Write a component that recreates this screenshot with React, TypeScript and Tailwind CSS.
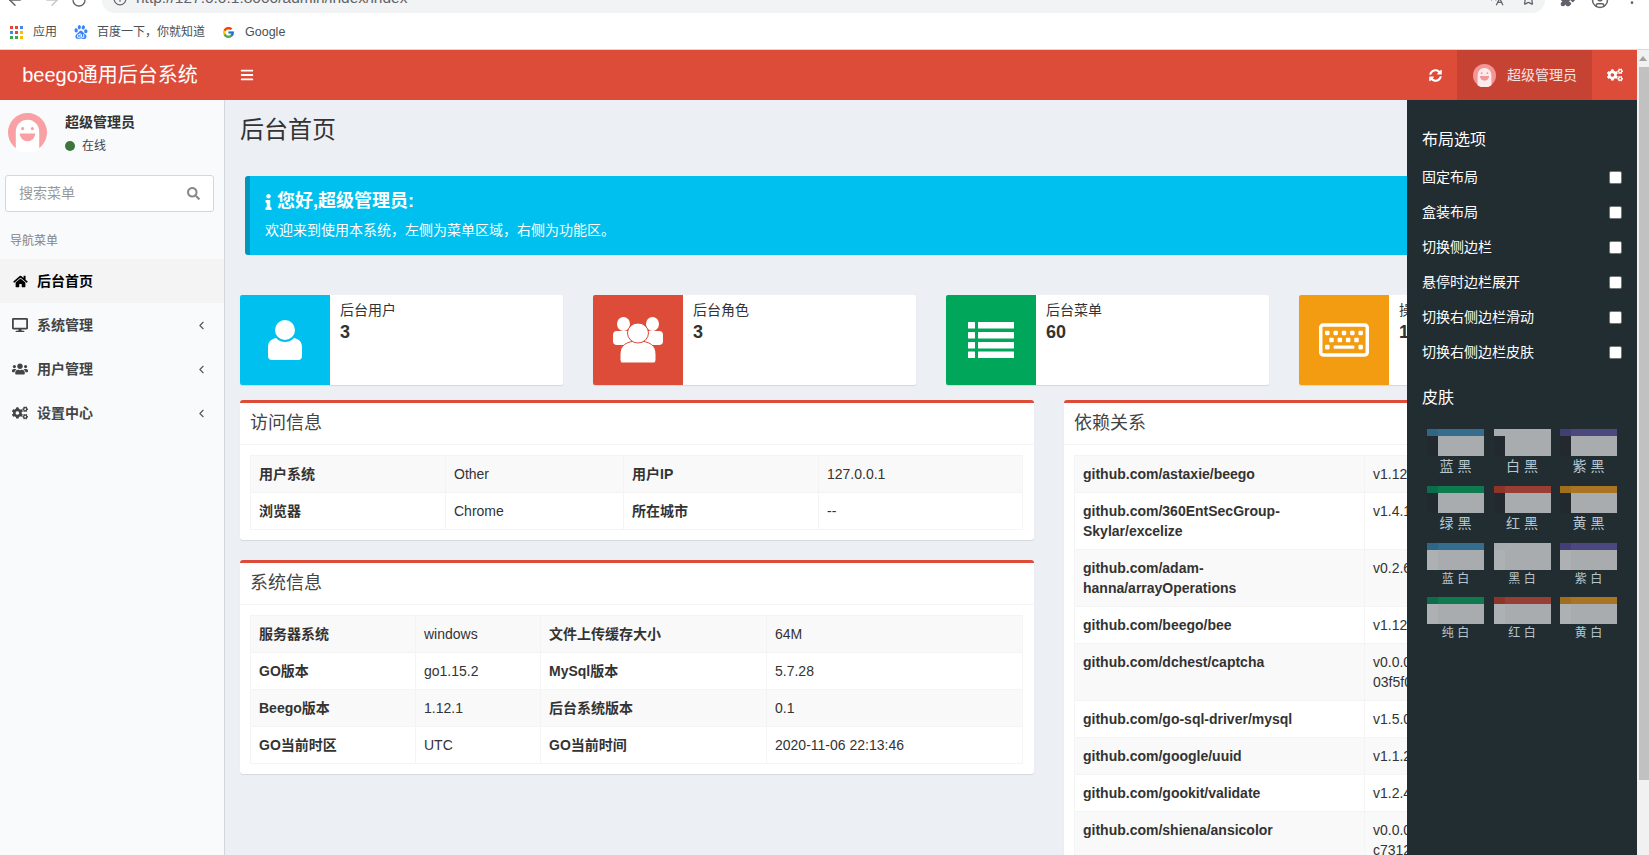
import { ArrowLeft, ArrowRight, ChevronLeft, RotateCw, Info, Star, Puzzle, CircleUser, EllipsisVertical, Languages } from "lucide-react";
import {
  FaBars,
  FaCogs,
  FaDesktop,
  FaHome,
  FaInfo,
  FaRegKeyboard,
  FaSearch,
  FaSyncAlt,
  FaUsers,
} from "react-icons/fa";
import { FcGoogle } from "react-icons/fc";
import { SiBaidu } from "react-icons/si";

const FONT = "font-['Liberation_Sans','Noto_Sans_CJK_SC',sans-serif]";

function PersonIcon() {
  return (
    <svg viewBox="0 0 34 40" className="h-[40px] w-[34px]" fill="#fff">
      <circle cx="17" cy="10" r="10" />
      <path d="M4 40q-4 0-4-4v-9c0-5 3-8 8-9 3 3 6 4 9 4s6-1 9-4c5 1 8 4 8 9v9q0 4-4 4z" />
    </svg>
  );
}

function PeopleIcon() {
  return (
    <svg viewBox="0 0 50 46" className="h-[46px] w-[50px]" fill="#fff">
      <ellipse cx="10.5" cy="7" rx="6.5" ry="7" />
      <ellipse cx="39.5" cy="7" rx="6.5" ry="7" />
      <rect x="0" y="14" width="18" height="14" rx="4" />
      <rect x="32" y="14" width="18" height="14" rx="4" />
      <path d="M9 46q-2 0-2-3v-6c0-8 6-13 18-13s18 5 18 13v6q0 3-2 3z" stroke="#dd4b39" />
      <ellipse cx="25" cy="16" rx="10.5" ry="10" stroke="#dd4b39" />
    </svg>
  );
}

function ListIcon() {
  return (
    <svg viewBox="0 0 46 36" className="h-[36px] w-[46px]" fill="#fff">
      {[0, 10, 20, 29.5].map((y) => (
        <g key={y}>
          <rect x="0" y={y} width="7" height="6.5" rx="0.5" />
          <rect x="10" y={y} width="36" height="6.5" rx="0.5" />
        </g>
      ))}
    </svg>
  );
}

const menuItems = [
  { label: "系统管理", icon: <FaDesktop /> },
  { label: "用户管理", icon: <FaUsers /> },
  { label: "设置中心", icon: <FaCogs /> },
];

const statBoxes = [
  { label: "后台用户", value: "3", color: "bg-[#00c0ef]", icon: <PersonIcon /> },
  { label: "后台角色", value: "3", color: "bg-[#dd4b39]", icon: <PeopleIcon /> },
  { label: "后台菜单", value: "60", color: "bg-[#00a65a]", icon: <ListIcon /> },
  { label: "操作日志", value: "1", color: "bg-[#f39c12]", icon: <FaRegKeyboard className="text-[50px] text-white" /> },
];

const visitRows = [
  ["用户系统", "Other", "用户IP", "127.0.0.1"],
  ["浏览器", "Chrome", "所在城市", "--"],
];

const systemRows = [
  ["服务器系统", "windows", "文件上传缓存大小", "64M"],
  ["GO版本", "go1.15.2", "MySql版本", "5.7.28"],
  ["Beego版本", "1.12.1", "后台系统版本", "0.1"],
  ["GO当前时区", "UTC", "GO当前时间", "2020-11-06 22:13:46"],
];

const dependencies = [
  ["github.com/astaxie/beego", "v1.12.1"],
  ["github.com/360EntSecGroup-Skylar/excelize", "v1.4.1"],
  ["github.com/adam-hanna/arrayOperations", "v0.2.6"],
  ["github.com/beego/bee", "v1.12.0"],
  ["github.com/dchest/captcha", "v0.0.0-20200903113550-03f5f0333e1f"],
  ["github.com/go-sql-driver/mysql", "v1.5.0"],
  ["github.com/google/uuid", "v1.1.2"],
  ["github.com/gookit/validate", "v1.2.4"],
  ["github.com/shiena/ansicolor", "v0.0.0-20200904210340-c7312218db18"],
];

const layoutOptions = ["固定布局", "盒装布局", "切换侧边栏", "悬停时边栏展开", "切换右侧边栏滑动", "切换右侧边栏皮肤"];

const skins = [
  { name: "蓝 黑", left: "bg-[#2f6585]", top: "bg-[#366d8f]", dark: true },
  { name: "白 黑", left: "bg-[#a8acae]", top: "bg-[#a8acae]", dark: true },
  { name: "紫 黑", left: "bg-[#433f75]", top: "bg-[#4b4880]", dark: true },
  { name: "绿 黑", left: "bg-[#0b6d4a]", top: "bg-[#0e7a50]", dark: true },
  { name: "红 黑", left: "bg-[#8f3428]", top: "bg-[#983e34]", dark: true },
  { name: "黄 黑", left: "bg-[#a06f1e]", top: "bg-[#a97522]", dark: true },
  { name: "蓝 白", left: "bg-[#2f6585]", top: "bg-[#366d8f]", dark: false },
  { name: "黑 白", left: "bg-[#a8acae]", top: "bg-[#a8acae]", dark: false },
  { name: "紫 白", left: "bg-[#433f75]", top: "bg-[#4b4880]", dark: false },
  { name: "纯 白", left: "bg-[#0b6d4a]", top: "bg-[#0e7a50]", dark: false },
  { name: "红 白", left: "bg-[#8f3428]", top: "bg-[#983e34]", dark: false },
  { name: "黄 白", left: "bg-[#a06f1e]", top: "bg-[#a97522]", dark: false },
];

function Avatar({ className }: { className: string }) {
  return (
    <svg viewBox="0 0 40 40" className={className}>
      <circle cx="20" cy="20" r="20" fill="#f9a0a4" />
      <path d="M8 37V19a12 12 0 0 1 24 0v18a20 20 0 0 1-24 0z" fill="#fff" />
      <circle cx="15" cy="16" r="1.6" fill="#f9a0a4" />
      <circle cx="25" cy="16" r="1.6" fill="#f9a0a4" />
      <path d="M12 21h16a8 8 0 0 1-16 0z" fill="#f9a0a4" />
    </svg>
  );
}

function AppsIcon() {
  const colors = ["#ea4335", "#ea4335", "#4285f4", "#4285f4", "#ea4335", "#fbbc04", "#34a853", "#34a853", "#fbbc04"];
  return (
    <div className="grid h-[13px] w-[13px] grid-cols-3 gap-[2px]">
      {colors.map((color, index) => (
        <span key={index} style={{ backgroundColor: color }} />
      ))}
    </div>
  );
}

function BrowserBar() {
  return (
    <>
      <div className="flex h-[13px] items-start overflow-hidden bg-white text-[#5f6368]">
        <ArrowLeft size={18} className="-mt-[9px] ml-[6px] shrink-0" />
        <ArrowRight size={18} className="-mt-[9px] ml-[19px] shrink-0 text-[#c4c7c9]" />
        <RotateCw size={16} className="-mt-[8px] ml-[10px] shrink-0" />
        <div className="ml-[15px] flex h-[13px] w-[1443px] shrink-0 items-start rounded-br-[13px] rounded-bl-[13px] bg-[#f1f3f4]">
          <Info size={14} className="-mt-[8px] ml-[11px] shrink-0" />
          <span className="-mt-[12px] ml-[9px] text-[15.5px] leading-[20px] text-[#5f6368]">http://127.0.0.1:8000/admin/index/index</span>
          <Languages size={15} className="-mt-[9px] ml-auto shrink-0" />
          <Star size={15} className="-mt-[9px] mr-[9px] ml-[17px] shrink-0" />
        </div>
        <Puzzle size={16} fill="#5f6368" className="-mt-[9px] ml-[15px] shrink-0" />
        <CircleUser size={18} className="-mt-[9px] ml-[15px] shrink-0" />
        <EllipsisVertical size={16} className="-mt-[10px] ml-[15px] shrink-0" />
      </div>
      <div className="flex h-[37px] items-center border-b border-[#d9d9d9] bg-white pt-[2px] text-[12px] text-[#4a4f54]">
        <div className="ml-[10px]">
          <AppsIcon />
        </div>
        <span className="ml-[10px]">应用</span>
        <SiBaidu className="ml-[17px] text-[14px] text-[#3b82f6]" />
        <span className="ml-[9px]">百度一下，你就知道</span>
        <FcGoogle className="ml-[17px] text-[13px]" />
        <span className="ml-[10px] text-[12.5px]">Google</span>
      </div>
    </>
  );
}

function Header() {
  return (
    <header className="flex h-[50px] items-center bg-[#dd4b39] text-white">
      <div className="w-[225px] pr-[5px] text-center text-[20px] leading-[50px]">beego通用后台系统</div>
      <FaBars className="ml-[15px] text-[14px]" />
      <div className="ml-auto flex h-full items-center">
        <FaSyncAlt className="mr-[15px] text-[13px]" />
        <div className="flex h-full w-[135px] items-center bg-[#c64333] pl-[16px]">
          <Avatar className="h-[23px] w-[23px] opacity-90" />
          <span className="ml-[11px] text-[14px] text-[#f6e3e0]">超级管理员</span>
        </div>
        <div className="flex h-full w-[45px] items-center justify-center">
          <FaCogs className="text-[16px]" />
        </div>
      </div>
    </header>
  );
}

function Sidebar() {
  return (
    <aside className="w-[225px] shrink-0 border-r border-[#d2d6de] bg-[#f9fafc]">
      <div className="flex h-[75px] pt-[13px] pl-[8px]">
        <Avatar className="h-[39px] w-[39px]" />
        <div className="-mt-[1px] ml-[18px]">
          <p className="text-[14px] leading-[20px] font-semibold text-[#333]">超级管理员</p>
          <p className="mt-[4px] flex items-center text-[12px] leading-[20px] text-[#444]">
            <span className="h-[10px] w-[10px] rounded-full bg-[#3c763d]" />
            <span className="ml-[7px]">在线</span>
          </p>
        </div>
      </div>
      <div className="mx-[5px] flex h-[37px] w-[209px] items-center rounded-[3px] border border-[#d2d6de] bg-white pr-[13px] pl-[13px]">
        <span className="text-[14px] text-[#999]">搜索菜单</span>
        <FaSearch className="ml-auto text-[13px] text-[#8a8a8a]" />
      </div>
      <p className="mt-[20px] h-[27px] pl-[10px] text-[12px] leading-[18px] text-[#848484]">导航菜单</p>
      <nav>
        <div className="flex h-[44px] items-center bg-[#f4f4f5] pl-[13px] text-[14px] font-semibold text-black">
          <FaHome className="w-[15px] text-[13px]" />
          <span className="ml-[9px]">后台首页</span>
        </div>
        {menuItems.map((item) => (
          <div key={item.label} className="flex h-[44px] items-center pr-[16px] pl-[12px] text-[14px] font-semibold text-[#444]">
            <span className="flex w-[16px] justify-center text-[16px]">{item.icon}</span>
            <span className="ml-[9px]">{item.label}</span>
            <ChevronLeft size={13} className="ml-auto text-[#555]" />
          </div>
        ))}
      </nav>
    </aside>
  );
}

function StatBox({ box }: { box: (typeof statBoxes)[number] }) {
  return (
    <div className="flex h-[90px] w-[323px] shrink-0 overflow-hidden rounded-[2px] bg-white shadow-[0_1px_1px_rgba(0,0,0,0.1)]">
      <div className={`flex w-[90px] shrink-0 items-center justify-center ${box.color}`}>{box.icon}</div>
      <div className="px-[10px] py-[5px] text-[#333]">
        <p className="text-[14px] leading-[20px]">{box.label}</p>
        <p className="text-[18px] leading-[25px] font-bold">{box.value}</p>
      </div>
    </div>
  );
}

function Panel({ title, children }: { title: string; children: React.ReactNode }) {
  return (
    <section className="rounded-[3px] border-t-[3px] border-[#dd4b39] bg-white shadow-[0_1px_1px_rgba(0,0,0,0.1)]">
      <h3 className="h-[42px] border-b border-[#f4f4f4] px-[10px] text-[18px] leading-[41px] text-[#444]">{title}</h3>
      <div className="p-[10px]">{children}</div>
    </section>
  );
}

function InfoTable({ rows, widths }: { rows: string[][]; widths: string[] }) {
  return (
    <table className="w-[772px] table-fixed border-collapse border border-[#f4f4f4] text-[14px] leading-[20px] text-[#333]">
      <colgroup>
        {widths.map((width, index) => (
          <col key={index} style={{ width }} />
        ))}
      </colgroup>
      <tbody>
        {rows.map((row, index) => (
          <tr key={row[0]} className={index % 2 === 0 ? "bg-[#f9f9f9]" : ""}>
            {row.map((cell, cellIndex) => (
              <td key={cell} className={`border border-[#f4f4f4] p-[8px] ${cellIndex % 2 === 0 ? "font-bold" : ""}`}>
                {cell}
              </td>
            ))}
          </tr>
        ))}
      </tbody>
    </table>
  );
}

function DependencyTable() {
  return (
    <table className="w-[538px] table-fixed border-collapse border border-[#f4f4f4] text-[14px] leading-[20px] text-[#333]">
      <colgroup>
        <col style={{ width: "290px" }} />
        <col style={{ width: "248px" }} />
      </colgroup>
      <tbody>
        {dependencies.map(([name, version], index) => (
          <tr key={name} className={index % 2 === 0 ? "bg-[#f9f9f9]" : ""}>
            <td className="border border-[#f4f4f4] p-[8px] align-top font-bold">{name}</td>
            <td className="border border-[#f4f4f4] p-[8px] align-top">
              {version.includes("-") ? (
                <>
                  {version.slice(0, version.lastIndexOf("-") + 1)}
                  <br />
                  {version.slice(version.lastIndexOf("-") + 1)}
                </>
              ) : (
                version
              )}
            </td>
          </tr>
        ))}
      </tbody>
    </table>
  );
}

function SkinThumb({ skin }: { skin: (typeof skins)[number] }) {
  return (
    <div className="w-[57px] text-center">
      <div className="flex h-[7px]">
        <span className={`w-[11px] ${skin.left}`} />
        <span className={`flex-1 ${skin.top}`} />
      </div>
      <div className="flex h-[20px]">
        <span className={`w-[11px] ${skin.dark ? "bg-[#222a2f]" : "bg-[#aeb1b3]"}`} />
        <span className="flex-1 bg-[#a8acae]" />
      </div>
      <p className={`text-[#b8c7ce] ${skin.dark ? "h-[30px] text-[14px] leading-[21px]" : "h-[27px] text-[12px] leading-[18px]"}`}>{skin.name}</p>
    </div>
  );
}

function ControlPanel() {
  return (
    <aside className="absolute top-0 right-0 bottom-0 w-[230px] bg-[#222d32] px-[15px] text-white">
      <h4 className="mt-[30px] text-[16px] leading-[20px]">布局选项</h4>
      <div className="mt-[10px]">
        {layoutOptions.map((option) => (
          <div key={option} className="flex h-[35px] items-center justify-between text-[14px]">
            <span>{option}</span>
            <span className="h-[13px] w-[13px] rounded-[2px] border border-[#767676] bg-white" />
          </div>
        ))}
      </div>
      <h4 className="mt-[18px] text-[16px] leading-[20px]">皮肤</h4>
      <div className="mt-[21px] grid grid-cols-[57px_57px_57px] gap-x-[9.5px] pl-[5px]">
        {skins.map((skin) => (
          <SkinThumb key={skin.name} skin={skin} />
        ))}
      </div>
    </aside>
  );
}

export default function App() {
  return (
    <div className={`flex h-[855px] w-[1649px] flex-col overflow-hidden bg-white ${FONT}`}>
      <BrowserBar />
      <div className="flex min-h-0 flex-1">
        <div className="flex min-w-0 flex-1 flex-col">
          <Header />
          <div className="relative flex min-h-0 flex-1">
            <Sidebar />
            <main className="min-w-0 flex-1 overflow-hidden bg-[#ecf0f5] px-[15px] pt-[16px]">
              <h1 className="h-[28px] text-[24px] leading-[28px] text-[#333]">后台首页</h1>
              <div className="mt-[32px] ml-[5px] h-[79px] w-[1372px] rounded-[3px] border-l-[5px] border-[#0097bc] bg-[#00c0ef] pt-[11px] pl-[15px] text-white">
                <h4 className="flex items-center text-[18px] leading-[29px] font-bold">
                  <FaInfo className="mr-[5px] h-[16px] w-[7px]" />
                  您好,超级管理员:
                </h4>
                <p className="mt-[4px] text-[14px] leading-[20px]">欢迎来到使用本系统，左侧为菜单区域，右侧为功能区。</p>
              </div>
              <div className="mt-[40px] flex gap-[30px]">
                {statBoxes.map((box) => (
                  <StatBox key={box.label} box={box} />
                ))}
              </div>
              <div className="mt-[15px] flex gap-[30px]">
                <div className="flex w-[794px] shrink-0 flex-col gap-[20px]">
                  <Panel title="访问信息">
                    <InfoTable rows={visitRows} widths={["195px", "178px", "195px", "204px"]} />
                  </Panel>
                  <Panel title="系统信息">
                    <InfoTable rows={systemRows} widths={["165px", "125px", "226px", "256px"]} />
                  </Panel>
                </div>
                <div className="w-[558px] shrink-0">
                  <Panel title="依赖关系">
                    <DependencyTable />
                  </Panel>
                </div>
              </div>
            </main>
            <ControlPanel />
          </div>
        </div>
        <div className="flex w-[12px] shrink-0 flex-col bg-[#f1f1f1]">
          <div className="flex h-[17px] items-center justify-center">
            <span className="h-0 w-0 border-x-[4px] border-b-[5px] border-x-transparent border-b-[#a3a3a3]" />
          </div>
          <div className="ml-[2px] h-[713px] bg-[#c1c1c1]" />
        </div>
      </div>
    </div>
  );
}
